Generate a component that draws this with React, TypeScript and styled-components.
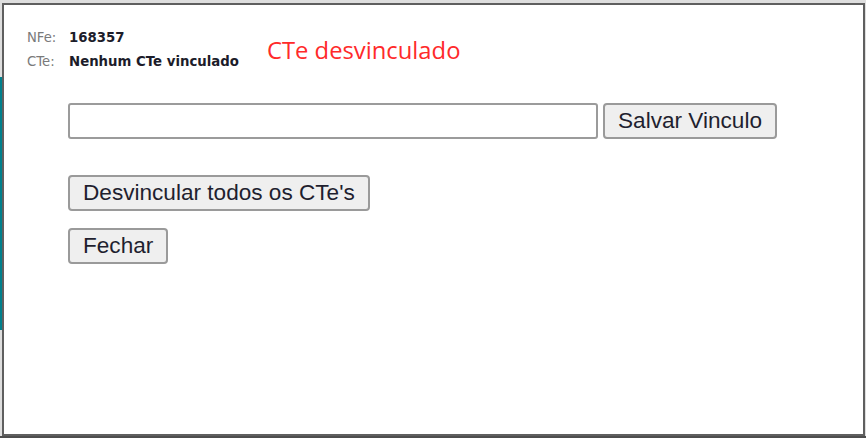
import React from "react";
import styled, { createGlobalStyle } from "styled-components";

const GlobalStyle = createGlobalStyle`
  html, body { margin: 0; padding: 0; background: #ffffff; }
  * { box-sizing: border-box; }
`;

const Screen = styled.div`
  width: 866px;
  height: 438px;
  overflow: hidden;
  display: flex;
  padding: 3px 1px 2px 2px;
  background:
    linear-gradient(#00808c, #00808c) 0 77px / 3px 253px no-repeat,
    linear-gradient(#4e4e4e, #4e4e4e) 0 436px / 100% 2px no-repeat,
    #dedede;
`;

const Dialog = styled.section`
  flex: 1;
  display: flex;
  flex-direction: column;
  background: #ffffff;
  border: 2px solid #5f5f5f;
`;

const Header = styled.header`
  display: flex;
  align-items: center;
  gap: 28px;
  padding: 20px 0 0 23px;
`;

const InfoGrid = styled.dl`
  display: grid;
  grid-template-columns: 42px auto;
  grid-auto-rows: 24px;
  align-items: center;
  margin: 0;
`;

const Label = styled.dt`
  font-family: "DejaVu Sans", Verdana, sans-serif;
  font-size: 13.2px;
  color: #7a7a7a;
`;

const Value = styled.dd`
  margin: 0;
  font-family: "DejaVu Sans", Verdana, sans-serif;
  font-size: 13.3px;
  font-weight: 700;
  color: #1c1c2a;
`;

const Message = styled.span`
  font-family: "Open Sans", "Noto Sans", sans-serif;
  font-size: 23.8px;
  color: #ff2a2a;
  margin-top: 2px;
`;

const Body = styled.div`
  display: flex;
  flex-direction: column;
  align-items: flex-start;
  padding: 30px 0 0 64px;
`;

const Row = styled.div<{ $gap?: number }>`
  display: flex;
  gap: 5px;
  margin-bottom: ${(p) => p.$gap ?? 0}px;
`;

const TextInput = styled.input`
  width: 530px;
  height: 36px;
  border: 2px solid #9b9b9b;
  border-radius: 3px;
  background: #ffffff;
  font-family: "Liberation Sans", Arial, sans-serif;
  font-size: 20px;
  padding: 0 6px;
  outline: none;
`;

const Button = styled.button`
  height: 36px;
  padding: 0 13px;
  border: 2px solid #9a9a9a;
  border-radius: 4px;
  background: #efefef;
  color: #1f1f2f;
  font-family: "Liberation Sans", Arial, sans-serif;
  font-size: 22.6px;
  line-height: 1;
  cursor: pointer;
`;

export default function App() {
  return (
    <>
      <GlobalStyle />
      <Screen>
        <Dialog>
          <Header>
            <InfoGrid>
              <Label>NFe:</Label>
              <Value>168357</Value>
              <Label>CTe:</Label>
              <Value>Nenhum CTe vinculado</Value>
            </InfoGrid>
            <Message>CTe desvinculado</Message>
          </Header>
          <Body>
            <Row $gap={36}>
              <TextInput type="text" />
              <Button>Salvar Vinculo</Button>
            </Row>
            <Row $gap={17}>
              <Button>Desvincular todos os CTe's</Button>
            </Row>
            <Row>
              <Button>Fechar</Button>
            </Row>
          </Body>
        </Dialog>
      </Screen>
    </>
  );
}
